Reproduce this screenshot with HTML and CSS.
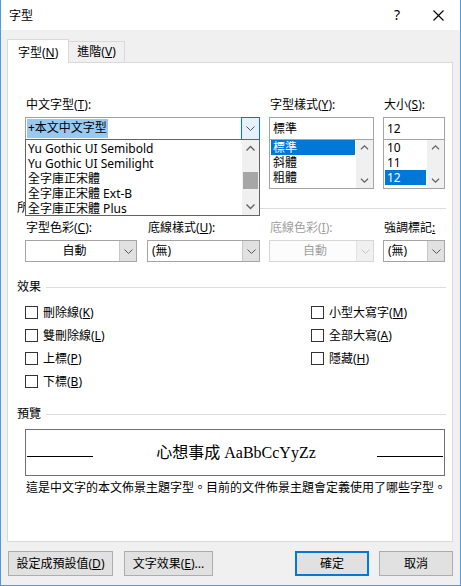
FILE: index.html
```html
<!DOCTYPE html>
<html lang="zh-Hant">
<head>
  <meta charset="UTF-8">
  <title>字型</title>
  <link rel="stylesheet" href="styles.css">
</head>
<body>
  <div class="window">
    <div class="titlebar">
      <span class="title">字型</span>
      <span class="help">?</span>
      <span class="close">
        <svg width="11" height="11" viewBox="0 0 11 11"><path d="M0.5 0.5 L10.5 10.5 M10.5 0.5 L0.5 10.5" stroke="#000" stroke-width="1.1" fill="none"/></svg>
      </span>
    </div>

    <div class="content">
      <div class="tabs">
        <div class="tab active">字型(<u>N</u>)</div>
        <div class="tab">進階(<u>V</u>)</div>
      </div>

      <div class="panel">
        <!-- font name / style / size -->
        <div class="row row-font">
          <div class="field f-name">
            <label>中文字型(<u>T</u>):</label>
            <div class="combo editable">
              <span class="value"><span class="sel">+本文中文字型</span></span>
              <span class="drop hot">
                <svg width="9" height="5" viewBox="0 0 9 5"><path d="M0.5 0.5 L4.5 4.5 L8.5 0.5" stroke="#555" fill="none"/></svg>
              </span>
            </div>
            <div class="droplist">
              <div class="items">
                <div class="item">Yu Gothic UI Semibold</div>
                <div class="item">Yu Gothic UI Semilight</div>
                <div class="item">全字庫正宋體</div>
                <div class="item">全字庫正宋體 Ext-B</div>
                <div class="item">全字庫正宋體 Plus</div>
              </div>
              <div class="vscroll">
                <svg class="arrow" width="17" height="17" viewBox="0 0 17 17"><path d="M4.5 10.5 L8.5 6.5 L12.5 10.5" stroke="#606060" stroke-width="1.3" fill="none"/></svg>
                <div class="track"><div class="thumb"></div></div>
                <svg class="arrow" width="17" height="17" viewBox="0 0 17 17"><path d="M4.5 6.5 L8.5 10.5 L12.5 6.5" stroke="#606060" stroke-width="1.3" fill="none"/></svg>
              </div>
            </div>
          </div>

          <div class="field f-style">
            <label>字型樣式(<u>Y</u>):</label>
            <div class="textbox">標準</div>
            <div class="listbox">
              <div class="items">
                <div class="item selected">標準</div>
                <div class="item">斜體</div>
                <div class="item">粗體</div>
              </div>
              <div class="vscroll short">
                <svg class="arrow" width="17" height="17" viewBox="0 0 17 17"><path d="M4.5 10.5 L8.5 6.5 L12.5 10.5" stroke="#606060" stroke-width="1.3" fill="none"/></svg>
                <div class="track"></div>
                <svg class="arrow" width="17" height="17" viewBox="0 0 17 17"><path d="M4.5 6.5 L8.5 10.5 L12.5 6.5" stroke="#606060" stroke-width="1.3" fill="none"/></svg>
              </div>
            </div>
          </div>

          <div class="field f-size">
            <label>大小(<u>S</u>):</label>
            <div class="textbox">12</div>
            <div class="listbox">
              <div class="items">
                <div class="item">10</div>
                <div class="item">11</div>
                <div class="item selected">12</div>
              </div>
              <div class="vscroll short">
                <svg class="arrow" width="17" height="17" viewBox="0 0 17 17"><path d="M4.5 10.5 L8.5 6.5 L12.5 10.5" stroke="#606060" stroke-width="1.3" fill="none"/></svg>
                <div class="track"></div>
                <svg class="arrow" width="17" height="17" viewBox="0 0 17 17"><path d="M4.5 6.5 L8.5 10.5 L12.5 6.5" stroke="#606060" stroke-width="1.3" fill="none"/></svg>
              </div>
            </div>
          </div>
        </div>

        <!-- mostly hidden behind the open font list -->
        <div class="group-head head-all"><span class="peek">所有文字</span></div>

        <!-- colour / underline -->
        <div class="row row-under">
          <div class="field c1">
            <label>字型色彩(<u>C</u>):</label>
            <div class="combo">
              <span class="value center">自動</span>
              <span class="drop"><svg width="9" height="5" viewBox="0 0 9 5"><path d="M0.5 0.5 L4.5 4.5 L8.5 0.5" stroke="#555" fill="none"/></svg></span>
            </div>
          </div>
          <div class="field c2">
            <label>底線樣式(<u>U</u>):</label>
            <div class="combo">
              <span class="value">(無)</span>
              <span class="drop"><svg width="9" height="5" viewBox="0 0 9 5"><path d="M0.5 0.5 L4.5 4.5 L8.5 0.5" stroke="#555" fill="none"/></svg></span>
            </div>
          </div>
          <div class="field c3 disabled">
            <label>底線色彩(<u>I</u>):</label>
            <div class="combo">
              <span class="value center">自動</span>
              <span class="drop"><svg width="9" height="5" viewBox="0 0 9 5"><path d="M0.5 0.5 L4.5 4.5 L8.5 0.5" stroke="#c4c4c4" fill="none"/></svg></span>
            </div>
          </div>
          <div class="field c4">
            <label>強調標記<u>:</u></label>
            <div class="combo">
              <span class="value">(無)</span>
              <span class="drop"><svg width="9" height="5" viewBox="0 0 9 5"><path d="M0.5 0.5 L4.5 4.5 L8.5 0.5" stroke="#555" fill="none"/></svg></span>
            </div>
          </div>
        </div>

        <div class="group-head head-effects"><span>效果</span></div>

        <div class="effects">
          <div class="col">
            <div class="check"><span class="box"></span>刪除線(<u>K</u>)</div>
            <div class="check"><span class="box"></span>雙刪除線(<u>L</u>)</div>
            <div class="check"><span class="box"></span>上標(<u>P</u>)</div>
            <div class="check"><span class="box"></span>下標(<u>B</u>)</div>
          </div>
          <div class="col right">
            <div class="check"><span class="box"></span>小型大寫字(<u>M</u>)</div>
            <div class="check"><span class="box"></span>全部大寫(<u>A</u>)</div>
            <div class="check"><span class="box"></span>隱藏(<u>H</u>)</div>
          </div>
        </div>

        <div class="group-head head-preview"><span>預覽</span></div>

        <div class="preview">
          <span class="rule"></span>
          <span class="sample">心想事成 AaBbCcYyZz</span>
          <span class="rule"></span>
        </div>

        <p class="desc">這是中文字的本文佈景主題字型。目前的文件佈景主題會定義使用了哪些字型。</p>
      </div>

      <div class="buttons">
        <button class="b-default">設定成預設值(<u>D</u>)</button>
        <button class="b-effects">文字效果(<u>E</u>)...</button>
        <span class="spacer"></span>
        <button class="b-ok">確定</button>
        <button class="b-cancel">取消</button>
      </div>
    </div>
  </div>
</body>
</html>
```

FILE: styles.css
```css
* {
  box-sizing: border-box;
  margin: 0;
  padding: 0;
}

body {
  font-family: "Noto Sans", "Noto Sans CJK TC", sans-serif;
  font-size: 12px;
  line-height: 16px;
  color: #000;
  background: #f0f0f0;
}

u {
  text-decoration: underline;
  text-underline-offset: 1px;
}

.window {
  width: 461px;
  height: 586px;
  border: 1px solid #4a9be3;
  border-top: none;
  background: #f0f0f0;
  overflow: hidden;
}

/* Title bar */
.titlebar {
  height: 30px;
  background: #fff;
  display: flex;
  align-items: center;
  padding-left: 8px;
}

.title {
  flex: 1;
  padding-top: 1px;
}

.help {
  font-size: 14px;
  width: 20px;
  text-align: center;
  margin-right: 26px;
}

.close {
  display: flex;
  width: 11px;
  margin-right: 16px;
}

/* Tabs */
.content {
  padding: 0 7px 0 6px;
}

.tabs {
  display: flex;
  align-items: flex-end;
  height: 32px;
}

.tab {
  height: 21px;
  padding: 2px 8px 0 8px;
  border: 1px solid #d9d9d9;
  border-bottom: none;
  background: #f0f0f0;
}

.tab.active {
  height: 24px;
  padding: 5px 10px 0 10px;
  margin-bottom: -1px;
  background: #fff;
  position: relative;
  z-index: 1;
}

.tab + .tab {
  border-left: none;
}

.panel {
  height: 480px;
  background: #fff;
  border: 1px solid #d9d9d9;
  padding: 34px 0 0 0;
}

/* Rows of fields */
.row {
  display: flex;
  padding-left: 17px;
}

.field {
  display: flex;
  flex-direction: column;
}

.field label {
  height: 16px;
  margin-bottom: 4px;
  padding-left: 1px;
}

.f-name { width: 235px; position: relative; }
.f-style { width: 105px; margin-left: 9px; }
.f-size { width: 62px; margin-left: 9px; }

.textbox,
.combo {
  height: 23px;
  border: 1px solid #a5a5a5;
  background: #fff;
  display: flex;
  align-items: center;
}

.textbox {
  padding-left: 3px;
}

.combo .value {
  flex: 1;
  padding-left: 4px;
}

.combo .value.center {
  text-align: center;
}

.combo .drop {
  width: 17px;
  align-self: stretch;
  display: flex;
  align-items: center;
  justify-content: center;
  background: #e1e1e1;
  border-left: 1px solid #c8c8c8;
}

.combo.editable {
  border-color: #a0a0a0;
}

.combo.editable .value {
  padding: 1px;
  align-self: stretch;
  display: flex;
}

.sel {
  background: #99c9ef;
  padding: 1px 1px 0 1px;
}

.combo .drop.hot {
  background: #e5f1fb;
  border: 1px solid #0078d7;
  margin: -1px -1px -1px 0;
  width: 19px;
}

/* List boxes */
.listbox {
  height: 49px;
  border: 1px solid #a5a5a5;
  border-top: none;
  display: flex;
  background: #fff;
}

.items {
  flex: 1;
  padding: 0 1px;
}

.item {
  height: 15px;
  line-height: 15px;
  padding-left: 2px;
}

.item.selected {
  background: #0078d7;
  color: #fff;
}

.vscroll {
  width: 17px;
  display: flex;
  flex-direction: column;
  background: #f0f0f0;
}

.vscroll.short .arrow {
  height: 15px;
}

.vscroll .track {
  flex: 1;
  padding: 0 1px;
}

.thumb {
  height: 17px;
  margin-top: 15px;
  background: #a6a6a6;
}

.droplist {
  position: absolute;
  top: 42px;
  left: 0;
  width: 235px;
  height: 77px;
  border: 1px solid #646464;
  background: #fff;
  display: flex;
  z-index: 2;
}

.droplist .items {
  padding: 1px 1px 0 1px;
}

.droplist .item {
  padding-left: 1px;
}

/* Group headings */
.group-head {
  display: flex;
  align-items: center;
  gap: 5px;
  padding-left: 9px;
  width: 438px;
  height: 16px;
}

.group-head::after {
  content: '';
  flex: 1;
  height: 1px;
  background: #dcdcdc;
}

.group-head .peek {
  width: 8px;
  overflow: hidden;
  white-space: nowrap;
  margin-right: 40px;
}

.head-all { margin-top: 11px; }
.head-effects { margin-top: 17px; }
.head-preview { margin-top: 13px; }

.row-under {
  margin-top: 4px;
}

.c1 { width: 112px; }
.c2 { width: 113px; margin-left: 10px; }
.c3 { width: 105px; margin-left: 9px; }
.c4 { width: 62px; margin-left: 9px; }

.row-under .combo {
  height: 22px;
}

.disabled label,
.disabled .value {
  color: #a0a0a0;
}

.disabled .combo {
  border-color: #d6d6d6;
  background: #fcfcfc;
}

.disabled .combo .drop {
  background: #f0f0f0;
  border-left-color: #e3e3e3;
}

/* Effects */
.effects {
  display: flex;
  margin-top: 6px;
  padding-left: 17px;
}

.effects .col {
  width: 286px;
}

.effects .col.right {
  width: auto;
}

.check {
  height: 23px;
  display: flex;
  align-items: center;
}

.box {
  width: 13px;
  height: 13px;
  border: 1px solid #333;
  background: #fff;
  margin-right: 5px;
}

/* Preview */
.preview {
  margin: 7px 0 0 17px;
  width: 420px;
  height: 47px;
  border: 1px solid #707070;
  display: flex;
  align-items: center;
  justify-content: space-between;
  padding: 0 1px;
}

.rule {
  width: 66px;
  height: 1px;
  background: #000;
  margin-top: 7px;
}

.sample {
  font-family: "Liberation Serif", "Noto Sans CJK TC", serif;
  font-size: 16px;
  line-height: 20px;
  margin-left: 2px;
}

.desc {
  margin: 4px 0 0 18px;
}

/* Buttons */
.buttons {
  display: flex;
  margin-top: 9px;
  padding-left: 1px;
}

button {
  height: 25px;
  font-family: inherit;
  font-size: 12px;
  line-height: 16px;
  color: #000;
  background: #e1e1e1;
  border: 1px solid #adadad;
}

.b-default { width: 105px; }
.b-effects { width: 89px; margin-left: 11px; }
.spacer { flex: 1; }
.b-ok {
  width: 74px;
  border: 2px solid #0078d7;
}
.b-cancel { width: 74px; margin-left: 10px; }
```
